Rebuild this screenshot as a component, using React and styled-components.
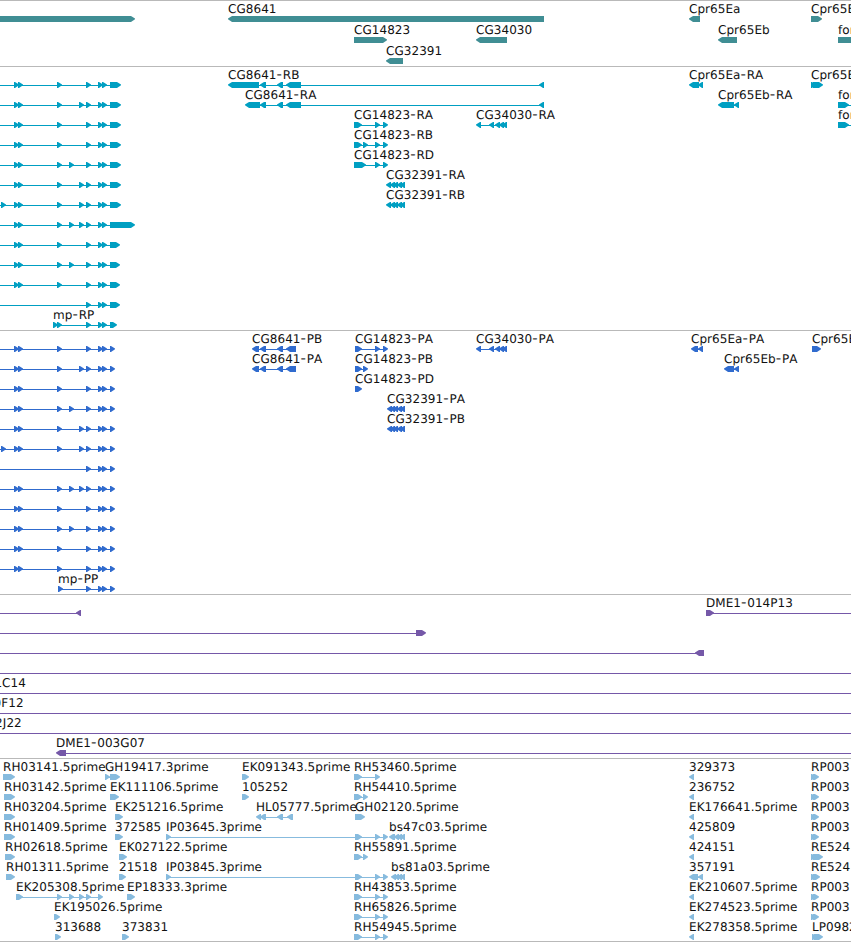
import React from "react";
import styled, { createGlobalStyle } from "styled-components";

const VIEW_WIDTH = 851;
const HEAD = 5;

// exon chains shared by the mp transcripts; a plain number is a 5px exon
const mp = (extra, last, from = 0) => ({
  dir: 1,
  from,
  exons: [14, 18, 57, 86, 98, 102, ...extra].sort((a, b) => a - b).concat([last]),
});
const mpShort = (last) => ({ dir: 1, from: 0, exons: [86, 98, 102, last] });

const right = (label, ...exons) => ({ dir: 1, label, exons });
const left = (label, ...exons) => ({ dir: -1, label, exons });

const cg34030 = [476, 489, 495, 499, 502];
const cg32391 = [386, 390, 393, 397, 400];
const rp = (label, end = 819) => right(label, 811, [813, end]);

const genes = [
  [
    { dir: 1, exons: [[-10, 135]] },
    left("CG8641", [228, 544]),
    left("Cpr65Ea", [689, 700]),
    right("Cpr65Ec", [811, 822]),
  ],
  [
    right("CG14823", [354, 387]),
    left("CG34030", [476, 507]),
    left("Cpr65Eb", [718, 737]),
    right("form3", [838, 870]),
  ],
  [left("CG32391", [386, 403])],
];

const transcripts = [
  [
    mp([], [110, 121]),
    left("CG8641-RB", [228, 259], [260, 266], [277, 283], [286, 301], 539),
    left("Cpr65Ea-RA", [689, 699], 698),
    right("Cpr65Ec-RA", 811, [813, 823]),
  ],
  [
    mp([79], [110, 121]),
    left("CG8641-RA", [245, 260], [260, 266], [277, 283], [286, 301], 539),
    left("Cpr65Eb-RA", [718, 734], 734),
    right("form3-RA", [838, 849], 870),
  ],
  [
    mp([], [110, 121]),
    right("CG14823-RA", [354, 362], 375, 383),
    left("CG34030-RA", ...cg34030),
    right("form3-RB", [838, 849], 870),
  ],
  [mp([], [110, 121]), right("CG14823-RB", [354, 362], 363, 375, 383)],
  [mp([69], [110, 121]), right("CG14823-RD", [354, 366], 375, 383)],
  [mp([79], [110, 121]), left("CG32391-RA", ...cg32391)],
  [mp([1, 79], [110, 121]), left("CG32391-RB", ...cg32391)],
  [mp([69, 79], [110, 135])],
  [mp([], [110, 120])],
  [mp([69], [110, 120])],
  [mp([], [110, 120])],
  [mpShort([110, 120])],
  [right("mp-RP", 53, 57, 86, 98, 102, [110, 117])],
];

const proteins = [
  [
    mp([], 110),
    left("CG8641-PB", [252, 259], [260, 266], [277, 283], [286, 296]),
    right("CG14823-PA", [355, 362], 375, 383),
    left("CG34030-PA", ...cg34030),
    left("Cpr65Ea-PA", [691, 698], 698),
    right("Cpr65Ec-PA", [812, 821]),
  ],
  [
    mp([79], 110),
    left("CG8641-PA", [252, 259], [260, 266], [277, 283], [286, 296]),
    right("CG14823-PB", [355, 362], 363),
    left("Cpr65Eb-PA", [724, 734], 734),
  ],
  [mp([], 110), right("CG14823-PD", [355, 362])],
  [mp([69], 110), left("CG32391-PA", 387, ...cg32391.slice(1))],
  [mp([79], 110), left("CG32391-PB", 387, ...cg32391.slice(1))],
  [mp([1, 79], 110)],
  [mpShort(110)],
  [mp([69, 79], 110)],
  [mp([], 110)],
  [mp([69], 110)],
  [mp([], 110)],
  [mp([], 110)],
  [right("mp-PP", 58, 86, 98, 102, 110)],
];

const span = (label, labelX) => ({ dir: 1, label, labelX, from: 0, to: VIEW_WIDTH, exons: [] });

const bacs = [
  [
    { dir: -1, from: 0, exons: [76] },
    { dir: 1, label: "DME1-014P13", to: VIEW_WIDTH, exons: [[706, 714]] },
  ],
  [{ dir: 1, from: 0, exons: [[416, 426]] }],
  [{ dir: -1, from: 0, exons: [[695, 704]] }],
  [span()],
  [span("1C14", -5.6)],
  [span("0F12", -6.4)],
  [span("2J22", -4.9)],
  [{ dir: -1, label: "DME1-003G07", to: VIEW_WIDTH, exons: [[56, 66]] }],
];

const ests = [
  [
    right("RH03141.5prime", [3, 15]),
    right("GH19417.3prime", 105, [110, 120]),
    right("EK091343.5prime", [242, 249]),
    right("RH53460.5prime", [354, 362], 375),
    left("329373", 689),
    rp("RP003"),
  ],
  [
    right("RH03142.5prime", [4, 15]),
    right("EK111106.5prime", [110, 119]),
    right("105252", [242, 249]),
    right("RH54410.5prime", [354, 362], 363),
    left("236752", 689),
    rp("RP003"),
  ],
  [
    right("RH03204.5prime", [4, 15]),
    right("EK251216.5prime", [115, 123]),
    left("HL05777.5prime", 256, [260, 266], [277, 283], [287, 293]),
    right("GH02120.5prime", [355, 365]),
    left("EK176641.5prime", 689),
    rp("RP003"),
  ],
  [
    right("RH01409.5prime", [4, 15]),
    right("372585", [115, 123]),
    right("IP03645.3prime", 166, [355, 362], 375, 383),
    left("bs47c03.5prime", [389, 395], 394, 397, 400),
    left("425809", 689),
    rp("RP003"),
  ],
  [
    right("RH02618.5prime", [5, 15]),
    right("EK027122.5prime", [119, 127]),
    right("RH55891.5prime", [354, 362], 363),
    left("424151", 689),
    rp("RE524", 823),
  ],
  [
    right("RH01311.5prime", [6, 15]),
    right("21518", [119, 126]),
    right("IP03845.3prime", 166, [355, 362], 375, 383),
    left("bs81a03.5prime", 391, 394, 397, 400),
    left("357191", [689, 698], 698),
    rp("RE524", 820),
  ],
  [
    right("EK205308.5prime", [16, 23], 57, 69, 79, 86, 98),
    right("EP18333.3prime", [127, 135]),
    right("RH43853.5prime", [354, 362], 375, 383),
    left("EK210607.5prime", 689),
    rp("RP003"),
  ],
  [
    right("EK195026.5prime", [54, 60]),
    right("RH65826.5prime", [354, 362], 375, 383),
    left("EK274523.5prime", 689),
    rp("RP003"),
  ],
  [
    right("313688", [55, 61]),
    right("373831", [122, 129]),
    right("RH54945.5prime", [354, 362], 375, 383),
    left("EK278358.5prime", 689),
    right("LP0982", 812, [814, 823]),
  ],
];

const tracks = [
  { name: "gene", color: "#408e94", laneHeight: 21, gap: 0, lanes: genes },
  { name: "transcript", color: "#009fc2", laneHeight: 20, gap: 1, lanes: transcripts },
  { name: "protein", color: "#306bce", laneHeight: 20, gap: 1, lanes: proteins },
  { name: "bac", color: "#7558a8", laneHeight: 20, gap: 1, lanes: bacs },
  { name: "est", color: "#87bbde", laneHeight: 20, gap: 0, lanes: ests },
];

const Exon = ({ start, end, dir }) => {
  // tip is the pointed side, tail the square one
  const tip = dir > 0 ? end : start;
  const tail = dir > 0 ? start : end;
  const neck = dir > 0 ? end - HEAD + 1 : start + HEAD - 1;
  return (
    <polygon
      points={`${tail},13 ${neck},13 ${tip},15.4 ${tip},16.2 ${neck},19 ${tail},19`}
    />
  );
};

const Feature = ({ dir, label, labelX, from, to, exons }) => {
  const boxes = exons.map((e) => (Array.isArray(e) ? e : [e, e + HEAD]));
  const start = from ?? boxes[0][0] + 2;
  const end = to ?? boxes[boxes.length - 1][1] - 2;
  return (
    <g>
      <Intron x={start} y={16} width={end - start} height={1} />
      {boxes.map(([a, b]) => (
        <Exon key={a} start={a} end={b} dir={dir} />
      ))}
      {label && (
        <Label x={labelX ?? boxes[0][0]} y={10}>
          {label.split(/(-)/).map((part, i) =>
            part === "-" ? <Dash key={i}>-</Dash> : part
          )}
        </Label>
      )}
    </g>
  );
};

const App = () => {
  return (
    <Browser>
      <GlobalStyle />
      {tracks.map(({ name, color, laneHeight, gap, lanes }) => (
        <Track key={name} $gap={gap}>
          {lanes.map((features, i) => (
            <Lane key={i} $height={laneHeight} $color={color}>
              {features.map((feature, j) => (
                <Feature key={j} {...feature} />
              ))}
            </Lane>
          ))}
        </Track>
      ))}
    </Browser>
  );
};

export default App;

const GlobalStyle = createGlobalStyle`
  body {
    margin: 0;
    background: #fff;
    overflow: hidden;
  }
`;

const Browser = styled.main`
  display: flex;
  flex-direction: column;
  width: ${VIEW_WIDTH}px;
  height: 942px;
  box-sizing: border-box;
  overflow: hidden;
  border-bottom: 1px solid #b9b9b9;
`;

const Track = styled.section`
  display: flex;
  flex-direction: column;
  border-top: 1px solid #b9b9b9;
  padding: 2px 0 ${(props) => props.$gap}px;
`;

const Lane = styled.svg`
  display: block;
  flex: none;
  width: 100%;
  height: ${(props) => props.$height}px;
  overflow: visible;
  fill: ${(props) => props.$color};
`;

const Intron = styled.rect`
  shape-rendering: crispEdges;
`;

const Label = styled.text`
  fill: #111;
  font-family: "DejaVu Sans", sans-serif;
  font-size: 12px;
  font-kerning: none;
  letter-spacing: 0.05px;
  text-rendering: geometricPrecision;
`;

const Dash = styled.tspan`
  font-size: 15px;
  letter-spacing: 0.8px;
  fill: #333;
`;
